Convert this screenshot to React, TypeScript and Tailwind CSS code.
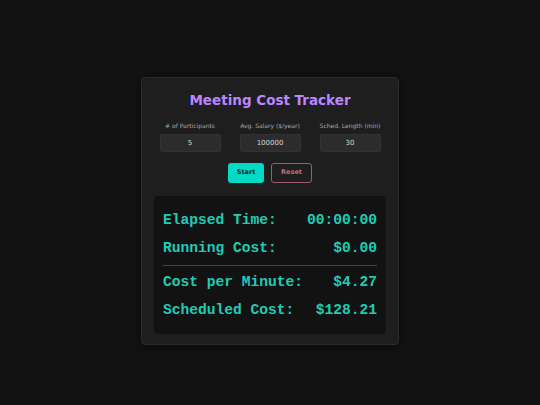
export default function App() {
  const fields = [
    { label: '# of Participants', value: '5' },
    { label: 'Avg. Salary ($/year)', value: '100000' },
    { label: 'Sched. Length (min)', value: '30' },
  ];

  return (
    <div className="min-h-screen w-full bg-[#121212] flex items-center justify-center pt-[17px] font-['DejaVu_Sans',sans-serif]">
      <div className="w-[258px] h-[268px] rounded-[4px] border border-[#2c2c2c] bg-[#1e1e1e] px-[12px] pt-[13px] shadow-[0_2px_8px_rgba(0,0,0,0.5)]">
        <h1 className="text-center text-[13.5px] leading-[18px] font-bold text-[#bb86fc]">
          Meeting Cost Tracker
        </h1>

        <div className="mt-[13px] flex justify-center gap-[19px]">
          {fields.map((f) => (
            <div key={f.label} className="w-[61px] flex flex-col items-center">
              <span className="text-[6px] leading-[8px] text-[#a8a8a8] whitespace-nowrap">{f.label}</span>
              <div className="mt-[4px] w-[61px] h-[18px] rounded-[2px] border border-[#333] bg-[#2c2c2c] flex items-center justify-center text-[7px] text-[#d8d8d8]">
                {f.value}
              </div>
            </div>
          ))}
        </div>

        <div className="mt-[11px] flex justify-center gap-[7px]">
          <button className="w-[36px] h-[20px] rounded-[3px] bg-[#03dac6] text-[6.5px] font-bold text-[#1a1a1a]">
            Start
          </button>
          <button className="w-[41px] h-[20px] rounded-[3px] border border-[#a05a68] text-[6.5px] font-bold text-[#c46c7c]">
            Reset
          </button>
        </div>

        <div className="mt-[13px] h-[138px] rounded-[4px] bg-[#121212] px-[9px] pt-[10px] font-['Liberation_Mono',monospace] font-bold text-[14.6px] text-[#1fcdb6]">
          <div className="flex justify-between leading-[28px]">
            <span>Elapsed Time:</span>
            <span>00:00:00</span>
          </div>
          <div className="flex justify-between leading-[28px]">
            <span>Running Cost:</span>
            <span>$0.00</span>
          </div>
          <div className="mt-[3px] mb-[2px] h-px bg-[#444]" />
          <div className="flex justify-between leading-[28px]">
            <span>Cost per Minute:</span>
            <span>$4.27</span>
          </div>
          <div className="flex justify-between leading-[28px]">
            <span>Scheduled Cost:</span>
            <span>$128.21</span>
          </div>
        </div>
      </div>
    </div>
  );
}
